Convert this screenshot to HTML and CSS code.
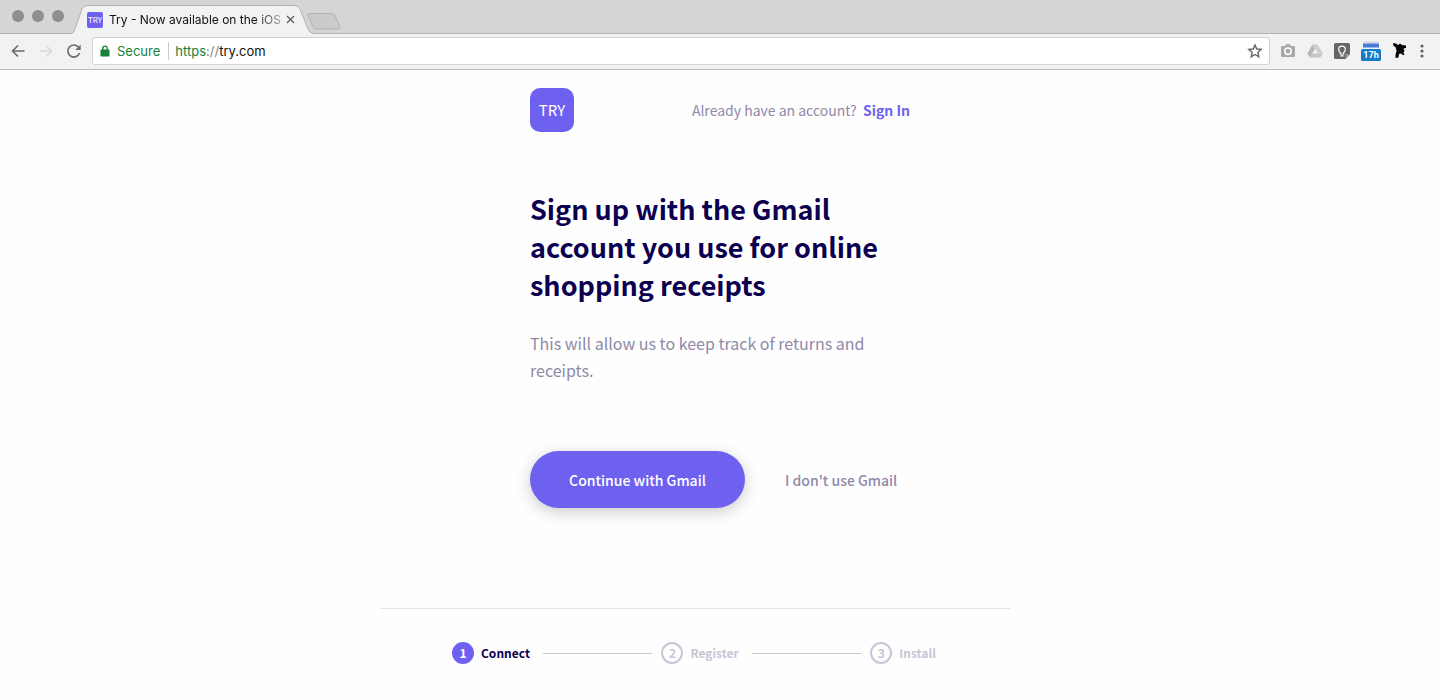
FILE: index.html
```html
<!DOCTYPE html>
<html lang="en">
<head>
<meta charset="utf-8">
<meta name="viewport" content="width=device-width, initial-scale=1">
<title>Try - Now available on the iOS</title>
<link rel="stylesheet" href="styles.css">
</head>
<body>
<header class="browser">
  <div class="tabstrip">
    <div class="lights"><span></span><span></span><span></span></div>
    <div class="tab">
      <svg class="tab-shape" width="242" height="29" viewBox="0 0 242 29" aria-hidden="true"><path d="M0 29C3 28 3 26 4 24L11 4Q12 1 16 1H223Q227 1 229 4L237 24Q239 28 242 29Z" fill="#f2f2f2"/><path d="M0 28.500C3 28 3 26 4 24L11 4Q12 .5 16 .5H223Q227 .5 229 4L237 24Q239 28 242 28.500" fill="none" stroke="#b3b1b2"/></svg>
      <span class="favicon">TRY</span>
      <span class="tab-title">Try - Now available on the iOS</span>
      <button class="close" aria-label="Close tab"><svg width="9" height="9" viewBox="0 0 9 9"><path d="M1 1l7 7M8 1L1 8" stroke="#5a5a5a" stroke-width="1.300"/></svg></button>
    </div>
    <button class="new-tab" aria-label="New tab"><svg width="34" height="17" viewBox="0 0 34 17"><path d="M3 .5H25Q27 .5 28 2.500L33 14Q33.500 16 31.500 16H9Q7 16 6 14L1 2.500Q.5 .5 3 .5Z" fill="#cccacb" stroke="#b3b1b2"/></svg></button>
  </div>
  <div class="toolbar">
    <div class="nav">
      <button aria-label="Back"><svg width="16" height="16" viewBox="0 0 16 16"><path d="M14.500 8H2.500M8 2.500L2.500 8L8 13.500" fill="none" stroke="#696b70" stroke-width="1.700"/></svg></button>
      <button aria-label="Forward"><svg width="16" height="16" viewBox="0 0 16 16"><path d="M1.500 8H13.500M8 2.500L13.500 8L8 13.500" fill="none" stroke="#d9d9d9" stroke-width="1.700"/></svg></button>
      <button aria-label="Reload"><svg width="16" height="16" viewBox="0 0 16 16"><path d="M13.500 10A6 6 0 1 1 12.300 4" fill="none" stroke="#696b70" stroke-width="1.700"/><path d="M14.700 1.500V7H9.200Z" fill="#696b70"/></svg></button>
    </div>
    <div class="address">
      <svg width="10" height="12" viewBox="0 0 10 12" aria-hidden="true"><path d="M2.800 5V3.300a2.200 2.200 0 0 1 4.400 0V5" fill="none" stroke="#188038" stroke-width="1.400"/><rect x=".5" y="4.500" width="9" height="7" rx=".8" fill="#188038"/></svg>
      <span class="secure">Secure</span>
      <span class="url"><span class="scheme">https</span><span class="slashes">://</span>try.com</span>
      <button class="star" aria-label="Bookmark this page"><svg width="16" height="16" viewBox="0 0 16 16"><path d="M8 2L9.700 6l4.400.4-3.300 3 1 4.400L8 11.500l-3.800 2.300 1-4.400-3.300-3L6.300 6Z" fill="none" stroke="#606368" stroke-width="1.400"/></svg></button>
    </div>
    <div class="extensions">
      <button aria-label="Screenshot"><svg width="16" height="16" viewBox="0 0 16 16"><path d="M1 4.200Q1 3 2.200 3H4.800L6 1.300h4L11.200 3h2.600Q15 3 15 4.200V13Q15 14 13.800 14H2.200Q1 14 1 13Z" fill="#a8a8a8"/><circle cx="8" cy="8.300" r="3.200" fill="none" stroke="#fff" stroke-width="1.500"/></svg></button>
      <button aria-label="Drive"><svg width="16" height="16" viewBox="0 0 16 16"><path d="M5.500 1.500h5L16 10.500h-5Z" fill="#cdcdcd"/><path d="M5.500 1.500L8 6 3 14.500.2 10.500Z" fill="#b8b8b8"/><path d="M5.500 10.500H16L13.300 14.500H3Z" fill="#c6c6c6"/></svg></button>
      <button aria-label="Keep"><svg width="16" height="16" viewBox="0 0 16 16"><path d="M1.500 0h13Q16 0 16 1.500V11l-4.500 5h-10Q0 16 0 14.500v-13Q0 0 1.500 0Z" fill="#666"/><path d="M16 11l-4.500 5v-5Z" fill="#999"/><path d="M6.300 9.500Q4.700 8.300 4.700 6.400a3.300 3.300 0 0 1 6.600 0Q11.300 8.300 9.700 9.500v1.500H6.300ZM6.300 12.800h3.400" fill="none" stroke="#fff" stroke-width="1.200"/></svg></button>
      <button aria-label="Calendar, 17 hours"><svg width="20" height="20" viewBox="0 0 20 20"><path d="M2.500 1Q3 .5 4 .5H16Q17 .5 17.500 1V2.500H2.500Z" fill="#d4d6da"/><path d="M2 2.500H18V6.500H2Z" fill="#4679d8"/><rect y="8" width="20" height="12" rx="1.500" fill="#147bc8"/><text x="10" y="17" text-anchor="middle" class="badge">17h</text></svg></button>
      <button aria-label="Ninja"><svg width="16" height="18" viewBox="0 0 16 18"><path d="M1 1L4 1.500 6 3 8 1.500 10 3 14 3.500V6L11.500 6.500 12.500 9 11.500 10.500 12.500 13 10.500 13 9.500 11.500 7 12 6.500 15.500 3.500 16 3.500 13 4.500 8.500 3.500 5 1.500 4Z" fill="#080808"/></svg></button>
      <button aria-label="Menu"><svg width="6" height="16" viewBox="0 0 6 16" fill="#5f6368"><circle cx="3" cy="3" r="1.600"/><circle cx="3" cy="8" r="1.600"/><circle cx="3" cy="13" r="1.600"/></svg></button>
    </div>
  </div>
</header>
<main class="page">
  <section class="signup">
    <div class="top">
      <a class="logo" href="#" aria-label="Try home">TRY</a>
      <p class="account">Already have an account? <a href="#">Sign In</a></p>
    </div>
    <h1>Sign up with the Gmail account you use for online shopping receipts</h1>
    <p class="lead">This will allow us to keep track of returns and receipts.</p>
    <div class="actions">
      <button class="primary">Continue with Gmail</button>
      <button class="secondary">I don't use Gmail</button>
    </div>
  </section>
  <ol class="steps">
    <li class="step current"><span class="num">1</span>Connect</li>
    <li class="line" aria-hidden="true"></li>
    <li class="step"><span class="num">2</span>Register</li>
    <li class="line" aria-hidden="true"></li>
    <li class="step"><span class="num">3</span>Install</li>
  </ol>
</main>
</body>
</html>
```
FILE: styles.css
```css
* { box-sizing: border-box; }
body { margin: 0; background: #fefefe; font-family: "Noto Sans CJK SC", "Noto Sans", sans-serif; color: #0b0050; }
button { margin: 0; padding: 0; border: 0; background: none; font: inherit; color: inherit; cursor: pointer; }
svg { display: block; }
a { color: #6f61ef; text-decoration: none; }
p, h1, ol { margin: 0; padding: 0; }

.browser { font-family: Inter, Roboto, sans-serif; color: #111; }
.tabstrip { display: flex; height: 34px; padding: 5px 0 0 12px; background: #d6d4d5; border-bottom: 1px solid #b3b1b2; }
.lights { display: flex; gap: 8px; padding-top: 5px; }
.lights span { width: 12px; height: 12px; border-radius: 50%; background: #8e8d92; }
.tab { position: relative; display: flex; align-items: center; width: 242px; height: 29px; margin-left: 7px; padding: 0 18px 0 16px; }
.tab-shape { position: absolute; left: 0; top: 0; }
.favicon { position: relative; width: 16px; height: 16px; border-radius: 2px; background: #6f61ef; color: #fff; font: 400 8px/15px "Noto Sans CJK SC", sans-serif; text-align: center; }
.tab-title { position: relative; flex: 1; margin-left: 6px; white-space: nowrap; font-size: 12px; line-height: 16px; -webkit-mask-image: linear-gradient(90deg, #000 84%, transparent 108%); mask-image: linear-gradient(90deg, #000 84%, transparent 108%); }
.close { position: relative; margin-left: 4px; }
.new-tab { align-self: flex-start; margin: 8px 0 0 -6px; }
.toolbar { display: flex; align-items: center; gap: 10px; height: 36px; padding: 0 15px 2px 10px; background: #f2f2f2; border-bottom: 1px solid #bcbcbc; }
.nav { display: flex; gap: 12px; }
.address { display: flex; flex: 1; align-items: center; height: 28px; padding: 0 6px 0 7px; background: #fff; border: 1px solid #d3d3d3; border-radius: 3px; font-size: 13px; line-height: 18px; }
.secure { margin-left: 7px; padding-right: 8px; border-right: 1px solid #ccc; color: #188038; }
.url { margin-left: 6px; }
.scheme { color: #188038; }
.slashes { color: #808080; }
.star { margin-left: auto; }
.extensions { display: flex; align-items: center; gap: 11px; }
.badge { font: 700 9px Roboto, sans-serif; fill: #fff; }

.page { max-width: 680px; margin: 0 auto; padding-top: 18px; }
.signup { max-width: 380px; margin: 0 auto; }
.top { display: flex; align-items: center; justify-content: space-between; }
.logo { width: 44px; height: 44px; border-radius: 10px; background: #6f61ef; color: #fff; font-size: 15px; font-weight: 400; line-height: 43px; text-align: center; }
.account { color: #9089a8; font-size: 14px; line-height: 24px; }
.account a { margin-left: 3px; font-weight: 700; }
h1 { margin-top: 58px; font-size: 27px; line-height: 38px; font-weight: 700; }
.lead { margin-top: 26px; color: #9089a8; font-size: 16px; line-height: 27px; }
.actions { display: flex; align-items: center; gap: 40px; margin-top: 67px; }
.primary { width: 215px; height: 57px; border-radius: 29px; background: #6f61ef; color: #fff; font-size: 14px; font-weight: 500; box-shadow: 0 4px 16px rgba(0, 0, 0, 0.2); }
.secondary { color: #9089a8; font-size: 14px; font-weight: 500; white-space: nowrap; }
.steps { display: flex; align-items: center; max-width: 630px; margin-top: 100px; padding: 33px 74px 32px 72px; border-top: 1px solid #e4e1ef; list-style: none; }
.step { display: flex; align-items: center; gap: 7px; color: #c9c5d6; font-size: 12px; line-height: 22px; font-weight: 700; }
.num { display: flex; align-items: center; justify-content: center; width: 22px; height: 22px; border: 2px solid #c9c5d6; border-radius: 50%; }
.current { color: #0b0050; }
.current .num { border-color: #6f61ef; background: #6f61ef; color: #fff; }
.line { flex: 1; height: 1px; margin: 0 9px 0 13px; background: #c9c5d6; }
```
